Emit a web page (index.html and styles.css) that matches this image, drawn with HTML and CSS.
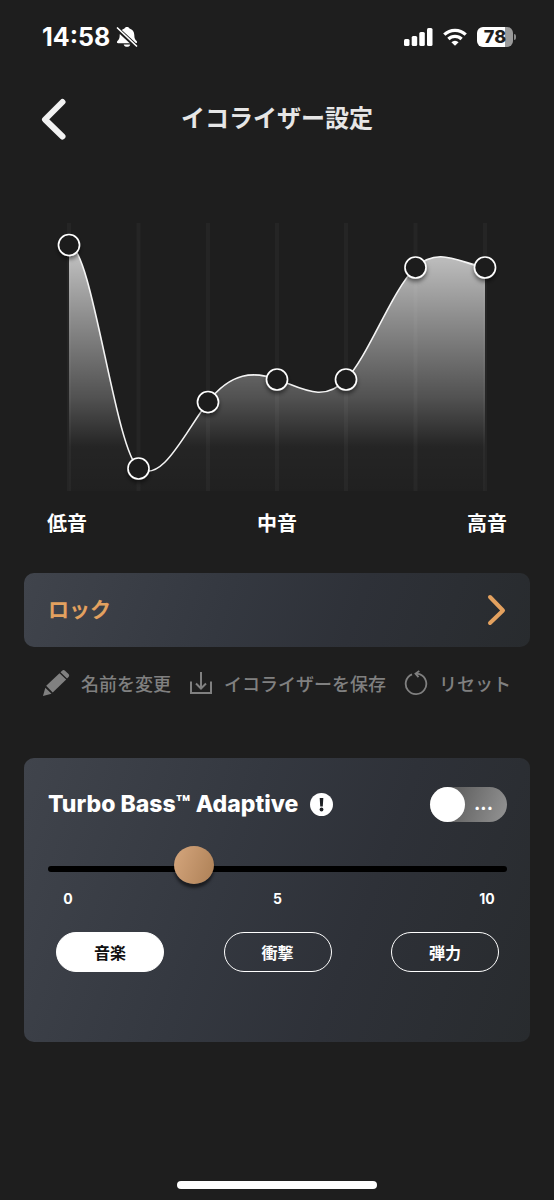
FILE: index.html
```html
<!DOCTYPE html>
<html lang="ja">
<head>
<meta charset="utf-8">
<meta name="viewport" content="width=device-width, initial-scale=1">
<title>イコライザー設定</title>
<link rel="stylesheet" href="styles.css">
</head>
<body>
<div class="screen">
  <div class="status">
    <div class="status-side">
      <span class="clock">14:58</span>
      <svg class="bell" width="22" height="22" viewBox="0 0 22 22" aria-hidden="true">
        <path d="M11 1c1.400 0 2.200.7 2.500 1.600 3 .9 4.800 3.200 4.800 6.400 0 3.400.8 4.600 2.300 6.100.9.900.5 2.100-.8 2.100H2.200c-1.300 0-1.700-1.200-.8-2.100C2.900 13.600 3.700 12.400 3.700 9c0-3.200 1.800-5.500 4.800-6.400C8.800 1.700 9.600 1 11 1z" fill="#fff"/>
        <path d="M7.700 18.500h6.600c-.3 1.500-1.700 2.300-3.300 2.300s-3-.8-3.300-2.300z" fill="#fff"/>
        <path d="M0.500 2l20 18.500" stroke="#1e1e1e" stroke-width="4.400"/>
        <path d="M1.500 2l19 18" stroke="#fff" stroke-width="1.700" stroke-linecap="round"/>
      </svg>
    </div>
    <div class="status-side">
      <svg width="29" height="20" viewBox="0 0 29 20" fill="#fff" aria-hidden="true">
        <rect x="0" y="12" width="5.500" height="7" rx="1.500"/>
        <rect x="7.700" y="9" width="5.500" height="10" rx="1.500"/>
        <rect x="15.300" y="5" width="5.500" height="14" rx="1.500"/>
        <rect x="23" y="1" width="5.500" height="18" rx="1.500"/>
      </svg>
      <svg width="24" height="20" viewBox="0 0 24 20" fill="none" stroke="#fff" stroke-width="3.200" aria-hidden="true">
        <path d="M1.300 7.700a15.200 15.200 0 0 1 21.400 0"/>
        <path d="M5.400 12a9.400 9.400 0 0 1 13.200 0"/>
        <path d="M12 18.800l-3.600-3.600a5 5 0 0 1 7.200 0z" fill="#fff" stroke="none"/>
      </svg>
      <div class="battery"><span class="battery-body">78</span><span class="battery-tip"></span></div>
    </div>
  </div>

  <header class="header">
    <button class="back" type="button" aria-label="戻る">
      <svg width="26" height="42" viewBox="0 0 26 42" fill="none" stroke="#f2f2f2" stroke-width="6" stroke-linecap="round" stroke-linejoin="round"><path d="M21.500 4L4 21.500 21.500 38.500"/></svg>
    </button>
    <h1 class="title">イコライザー設定</h1>
  </header>

  <main class="content">
    <section class="equalizer">
      <svg class="chart" viewBox="24 214 506 286" role="img" aria-label="イコライザー曲線">
        <defs>
          <linearGradient id="fill" gradientUnits="userSpaceOnUse" x1="0" y1="245" x2="0" y2="491">
            <stop offset="0" stop-color="#fff" stop-opacity=".75"/>
            <stop offset=".3" stop-color="#fff" stop-opacity=".49"/>
            <stop offset=".62" stop-color="#fff" stop-opacity=".23"/>
            <stop offset=".82" stop-color="#fff" stop-opacity=".03"/>
            <stop offset="1" stop-color="#fff" stop-opacity=".01"/>
          </linearGradient>
          <filter id="shadow" x="-50%" y="-50%" width="200%" height="200%">
            <feDropShadow dx="0" dy="3" stdDeviation="2" flood-color="#000" flood-opacity=".5"/>
          </filter>
        </defs>
        <path fill="url(#fill)" d="M69 245C92 245 115 450 138.500 468C161.600 485 185 432 208 402C231 372 254 371 277 379.500C300 387 323 404 346 379.500C369 355 392 290 415.500 267.500C438.500 245 462 264 485 267.500V491H69Z"/>
        <path stroke="#fff" stroke-opacity=".035" stroke-width="4" d="M69 223V491M138.500 223V491M208 223V491M277 223V491M346 223V491M415.500 223V491M485 223V491"/>
        <path fill="none" stroke="#f4f4f4" stroke-width="1.600" d="M69 245C92 245 115 450 138.500 468C161.600 485 185 432 208 402C231 372 254 371 277 379.500C300 387 323 404 346 379.500C369 355 392 290 415.500 267.500C438.500 245 462 264 485 267.500"/>
        <g fill="#1e1e1e" stroke="#fff" stroke-width="1.600" filter="url(#shadow)">
          <circle cx="69" cy="245" r="10.500"/>
          <circle cx="138.500" cy="468.500" r="10.500"/>
          <circle cx="208" cy="402" r="10.500"/>
          <circle cx="277" cy="379.500" r="10.500"/>
          <circle cx="346" cy="379.500" r="10.500"/>
          <circle cx="415.500" cy="267.500" r="10.500"/>
          <circle cx="485" cy="267.500" r="10.500"/>
        </g>
      </svg>
      <div class="bands"><span>低音</span><span>中音</span><span>高音</span></div>
    </section>

    <button class="card preset" type="button">
      <span>ロック</span>
      <svg width="20" height="32" viewBox="0 0 20 32" fill="none" stroke="#e3a15f" stroke-width="4" stroke-linecap="round" stroke-linejoin="round"><path d="M4 3l13 13.500L4 29"/></svg>
    </button>

    <div class="actions">
      <button class="action" type="button">
        <svg width="28" height="28" viewBox="0 0 28 28" fill="#808080" aria-hidden="true">
          <path d="M1 27l2.300-8.300 6.200 6z"/>
          <path d="M4.200 16.800L17.500 4.200l6.700 6.300-13.500 13z"/>
          <path d="M18.500 3.300l1.600-1.600c.9-.9 2-.9 2.900 0l3.500 3.300c.9.900.9 2 0 2.900L25 9.600z"/>
        </svg>
        <span>名前を変更</span>
      </button>
      <button class="action" type="button">
        <svg width="24" height="24" viewBox="0 0 24 24" fill="none" stroke="#808080" stroke-width="2" aria-hidden="true"><path d="M2 10.500V22h20V10.500M12 1v16M7 12.500l5 5 5-5"/></svg>
        <span>イコライザーを保存</span>
      </button>
      <button class="action" type="button">
        <svg width="24" height="26" viewBox="0 0 24 26" fill="none" stroke="#808080" stroke-width="1.800" aria-hidden="true"><path d="M8 4.300a10.300 10.300 0 1 0 7.500-.2L12 3.600"/><path d="M15.300 1L11.500 3.600l3 3.600"/></svg>
        <span>リセット</span>
      </button>
    </div>

    <section class="card bass">
      <div class="bass-head">
        <h2 class="bass-title">Turbo Bass™ Adaptive</h2>
        <button class="info" type="button" aria-label="情報">
          <svg width="23" height="23" viewBox="0 0 23 23"><circle cx="11.500" cy="11.500" r="11.500" fill="#fff"/><path d="M9.700 5h3.600l-.5 8.500h-2.600z" fill="#1e2024"/><circle cx="11.500" cy="16.500" r="1.900" fill="#1e2024"/></svg>
        </button>
        <label class="switch"><input class="switch-input" type="checkbox" aria-label="Turbo Bass Adaptive"><span class="knob"></span><span class="dots">...</span></label>
      </div>
      <input class="slider" type="range" min="0" max="10" value="3" aria-label="Turbo Bass レベル">
      <div class="scale"><span>0</span><span>5</span><span>10</span></div>
      <div class="modes">
        <button class="mode mode-on" type="button">音楽</button>
        <button class="mode" type="button">衝撃</button>
        <button class="mode" type="button">弾力</button>
      </div>
    </section>
  </main>
  <div class="home"></div>
</div>
</body>
</html>
```

FILE: styles.css
```css
* { box-sizing: border-box; }
body {
  margin: 0;
  background: #1e1e1e;
  color: #fff;
  font-family: Inter, "Noto Sans CJK JP", sans-serif;
}
button {
  padding: 0;
  border: 0;
  background: none;
  color: inherit;
  font: inherit;
  cursor: pointer;
}
svg { display: block; flex: none; }
.screen {
  display: flex;
  flex-direction: column;
  min-height: 100vh;
}
.status {
  display: flex;
  justify-content: space-between;
  align-items: center;
  height: 74px;
  padding: 0 38px 0 42px;
}
.status-side { display: flex; align-items: center; gap: 10px; }
.clock { font-size: 25px; font-weight: 700; line-height: 30px; }
.bell { margin-left: -4px; }
.battery { display: flex; align-items: center; gap: 1px; }
.battery-body {
  width: 36px;
  border-radius: 6px;
  background: linear-gradient(90deg, #fff 78%, #9a9a9a 78%);
  color: #1e1e1e;
  font-size: 18px;
  font-weight: 800;
  line-height: 20px;
  text-align: center;
}
.battery-tip { width: 2px; height: 6px; border-radius: 0 2px 2px 0; background: #8a8a8a; }
.header {
  display: grid;
  grid-template-columns: 26px 1fr 26px;
  align-items: center;
  height: 90px;
  padding: 0 41px;
}
.title {
  margin: 0;
  color: #e6e6e6;
  font-size: 24px;
  font-weight: 700;
  line-height: 32px;
  text-align: center;
}
.content { padding: 50px 24px 0; }
.chart { width: 100%; height: auto; }
.bands {
  display: flex;
  justify-content: space-between;
  padding: 9px 23px 0;
  font-size: 20px;
  font-weight: 700;
  line-height: 30px;
}
.card {
  border-radius: 10px;
  background: linear-gradient(110deg, #40444c 0%, #343840 40%, #2e3138 65%, #282b2e 100%);
}
.preset {
  display: flex;
  justify-content: space-between;
  align-items: center;
  width: 100%;
  height: 74px;
  margin-top: 34px;
  padding: 0 24px;
  color: #e3a15f;
  font-size: 21px;
  font-weight: 700;
  line-height: 32px;
}
.actions {
  display: flex;
  justify-content: space-between;
  padding: 20px 19px 0 18px;
}
.action {
  display: flex;
  align-items: center;
  gap: 11px;
  height: 32px;
  color: #808080;
  font-size: 18px;
  font-weight: 500;
}
.bass { height: 284px; margin-top: 59px; padding: 28px 23px 0 24px; }
.bass-head { display: flex; align-items: center; gap: 12px; height: 36px; }
.bass-title { margin: 0; font-size: 23px; font-weight: 800; line-height: 32px; }
.switch {
  display: flex;
  align-items: center;
  justify-content: space-between;
  position: relative;
  width: 77px;
  height: 35px;
  margin-left: auto;
  padding-right: 14px;
  border-radius: 18px;
  background: linear-gradient(110deg, #606060 30%, #949494 100%);
  cursor: pointer;
}
.switch-input { position: absolute; inset: 0; margin: 0; opacity: 0; }
.knob { width: 35px; height: 35px; border-radius: 50%; background: #fff; }
.dots { font-size: 19px; font-weight: 700; line-height: 24px; }
.slider {
  display: block;
  appearance: none;
  width: 100%;
  height: 40px;
  margin: 27px 0 0;
  background: none;
}
.slider::-webkit-slider-runnable-track { height: 6px; border-radius: 3px; background: #000; }
.slider::-webkit-slider-thumb {
  appearance: none;
  width: 40px;
  height: 38px;
  margin-top: -20px;
  border-radius: 50%;
  background: linear-gradient(110deg, #d5a67d, #ad8056);
  box-shadow: 0 4px 3px rgba(0, 0, 0, 0.5);
}
.scale {
  display: grid;
  grid-template-columns: 40px 40px 40px;
  justify-content: space-between;
  font-size: 14px;
  font-weight: 700;
  line-height: 20px;
  text-align: center;
}
.modes { display: flex; justify-content: space-between; padding: 23px 8px 0; }
.mode {
  width: 108px;
  height: 40px;
  border: 1px solid #fff;
  border-radius: 20px;
  font-size: 16px;
  font-weight: 700;
}
.mode-on { background: #fff; color: #111; }
.home {
  align-self: center;
  width: 36%;
  height: 8px;
  margin: auto 0 11px;
  border-radius: 4px;
  background: #fff;
}
```
